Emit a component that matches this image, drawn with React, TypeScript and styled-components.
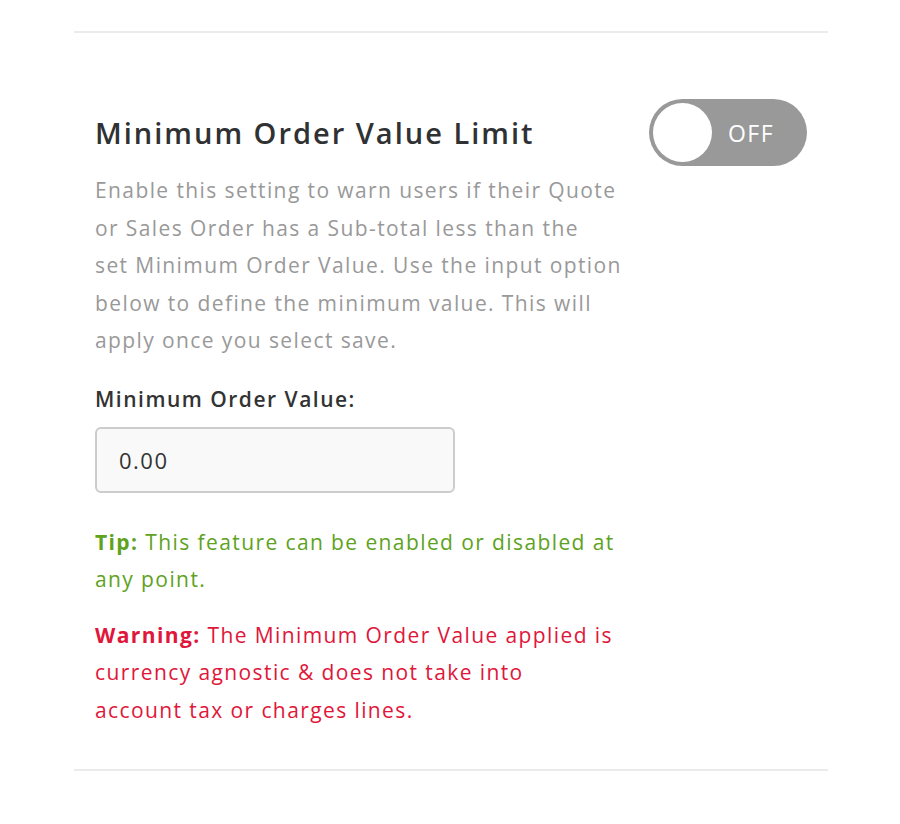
import React from 'react';
import styled, { createGlobalStyle } from 'styled-components';

const GlobalStyle = createGlobalStyle`
  body {
    margin: 0;
    background: #ffffff;
    font-family: 'Open Sans', 'Noto Sans', sans-serif;
  }
`;

const Page = styled.div`
  width: 754px;
  margin: 0 auto;
  padding-top: 31px;
  padding-left: 2px;
`;

const Section = styled.section`
  border-top: 2px solid #ebebeb;
  border-bottom: 2px solid #ebebeb;
  padding: 66px 21px 40px 21px;
`;

const Header = styled.div`
  display: flex;
  justify-content: space-between;
  align-items: center;
`;

const Title = styled.h2`
  margin: 0;
  font-size: 29px;
  font-weight: 600;
  letter-spacing: 2px;
  color: #2f3133;
`;

const Toggle = styled.button`
  width: 158px;
  height: 67px;
  border: none;
  border-radius: 34px;
  background: #999999;
  position: relative;
  padding: 0 0 0 46px;
  font-family: inherit;
  font-size: 23px;
  letter-spacing: 1.5px;
  color: #ffffff;
  cursor: pointer;
`;

const Knob = styled.span`
  position: absolute;
  top: 4px;
  left: 4px;
  width: 59px;
  height: 59px;
  border-radius: 50%;
  background: #ffffff;
`;

const Description = styled.p`
  margin: 6px 0 0 0;
  width: 560px;
  font-size: 21px;
  letter-spacing: 1.4px;
  line-height: 37.5px;
  color: #999999;
`;

const FieldLabel = styled.label`
  display: block;
  margin-top: 25px;
  font-size: 21px;
  font-weight: 600;
  letter-spacing: 1.5px;
  color: #333333;
`;

const ValueInput = styled.input`
  display: block;
  box-sizing: border-box;
  margin-top: 14px;
  width: 360px;
  height: 66px;
  padding: 0 22px;
  border: 2px solid #cccccc;
  border-radius: 6px;
  background: #f9f9f9;
  font-family: inherit;
  font-size: 22px;
  letter-spacing: 1.5px;
  color: #333333;
  outline: none;
`;

const Note = styled.p<{ $tone: 'tip' | 'warning' }>`
  margin: ${(p) => (p.$tone === 'tip' ? '31px' : '18px')} 0 0 0;
  width: 560px;
  font-size: 21px;
  letter-spacing: 1.4px;
  line-height: 37.5px;
  color: ${(p) => (p.$tone === 'tip' ? '#5ea21e' : '#e0163a')};

  strong {
    font-weight: 700;
  }
`;

export default function App() {
  return (
    <>
      <GlobalStyle />
      <Page>
        <Section>
          <Header>
            <Title>Minimum Order Value Limit</Title>
            <Toggle type="button">
              <Knob />
              OFF
            </Toggle>
          </Header>
          <Description>
            Enable this setting to warn users if their Quote
            <br />
            or Sales Order has a Sub-total less than the
            <br />
            set Minimum Order Value. Use the input option
            <br />
            below to define the minimum value. This will
            <br />
            apply once you select save.
          </Description>
          <FieldLabel htmlFor="mov">Minimum Order Value:</FieldLabel>
          <ValueInput id="mov" defaultValue="0.00" />
          <Note $tone="tip">
            <strong>Tip:</strong> This feature can be enabled or disabled at
            <br />
            any point.
          </Note>
          <Note $tone="warning">
            <strong>Warning:</strong> The Minimum Order Value applied is
            <br />
            currency agnostic &amp; does not take into
            <br />
            account tax or charges lines.
          </Note>
        </Section>
      </Page>
    </>
  );
}
